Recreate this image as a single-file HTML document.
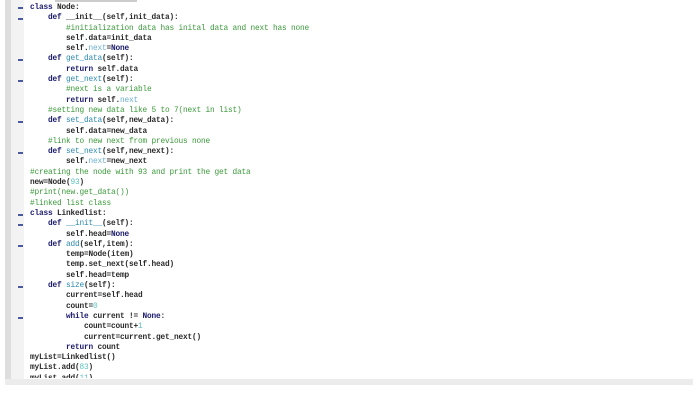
<!DOCTYPE html>
<html><head><style>
body{margin:0;width:700px;height:403px;background:#fff;position:relative;overflow:hidden}
.g1{position:absolute;left:5px;top:0;width:6px;height:380px;background:#dedede}
.g2{position:absolute;left:11px;top:0;width:13px;height:380px;background:#f3f3f3}
.bar{position:absolute;left:5px;top:379px;width:688px;height:6px;background:#ececec}
.top{position:absolute;left:55px;top:0;width:82px;height:2px;background:#ccc}
pre{position:absolute;left:30px;top:3px;margin:0;font-family:"Liberation Mono",monospace;font-size:7.8px;letter-spacing:-0.18px;line-height:10.29px;color:#2a2a2a;font-weight:bold;height:375px;overflow:hidden}
.k{color:#1a1a6e}.c{color:#3a9a3a;font-weight:normal}.f{color:#2a8ab0;font-weight:normal}.n{color:#5bc0c0;font-weight:normal}.s{color:#6ab0d0;font-weight:normal}
.m{position:absolute;left:18px;width:5px;height:2px;background:#4a5aa0}
</style></head><body>
<div class="g1"></div><div class="g2"></div><div class="top"></div>
<pre><span class="k">class</span> Node:
    <span class="k">def</span> __init__(self,init_data):
        <span class="c">#initialization data has inital data and next has none</span>
        self.data=init_data
        self.<span class="s">next</span>=<span class="k">None</span>
    <span class="k">def</span> <span class="f">get_data</span>(self):
        <span class="k">return</span> self.data
    <span class="k">def</span> <span class="f">get_next</span>(self):
        <span class="c">#next is a variable</span>
        <span class="k">return</span> self.<span class="s">next</span>
    <span class="c">#setting new data like 5 to 7(next in list)</span>
    <span class="k">def</span> <span class="f">set_data</span>(self,new_data):
        self.data=new_data
    <span class="c">#link to new next from previous none</span>
    <span class="k">def</span> <span class="f">set_next</span>(self,new_next):
        self.<span class="s">next</span>=new_next
<span class="c">#creating the node with 93 and print the get data</span>
new=Node(<span class="n">93</span>)
<span class="c">#print(new.get_data())</span>
<span class="c">#linked list class</span>
<span class="k">class</span> Linkedlist:
    <span class="k">def</span> <span class="f">__init__</span>(self):
        self.head=<span class="k">None</span>
    <span class="k">def</span> <span class="f">add</span>(self,item):
        temp=Node(item)
        temp.set_next(self.head)
        self.head=temp
    <span class="k">def</span> <span class="f">size</span>(self):
        current=self.head
        count=<span class="n">0</span>
        <span class="k">while</span> current != <span class="k">None</span>:
            count=count+<span class="n">1</span>
            current=current.get_next()
        <span class="k">return</span> count
myList=Linkedlist()
myList.add(<span class="n">83</span>)
myList.add(<span class="n">11</span>)</pre>
<div class="m" style="top:7px"></div>
<div class="m" style="top:18px"></div>
<div class="m" style="top:59px"></div>
<div class="m" style="top:80px"></div>
<div class="m" style="top:121px"></div>
<div class="m" style="top:152px"></div>
<div class="m" style="top:214px"></div>
<div class="m" style="top:224px"></div>
<div class="m" style="top:245px"></div>
<div class="m" style="top:286px"></div>
<div class="m" style="top:317px"></div>
<div class="bar"></div>
</body></html>
